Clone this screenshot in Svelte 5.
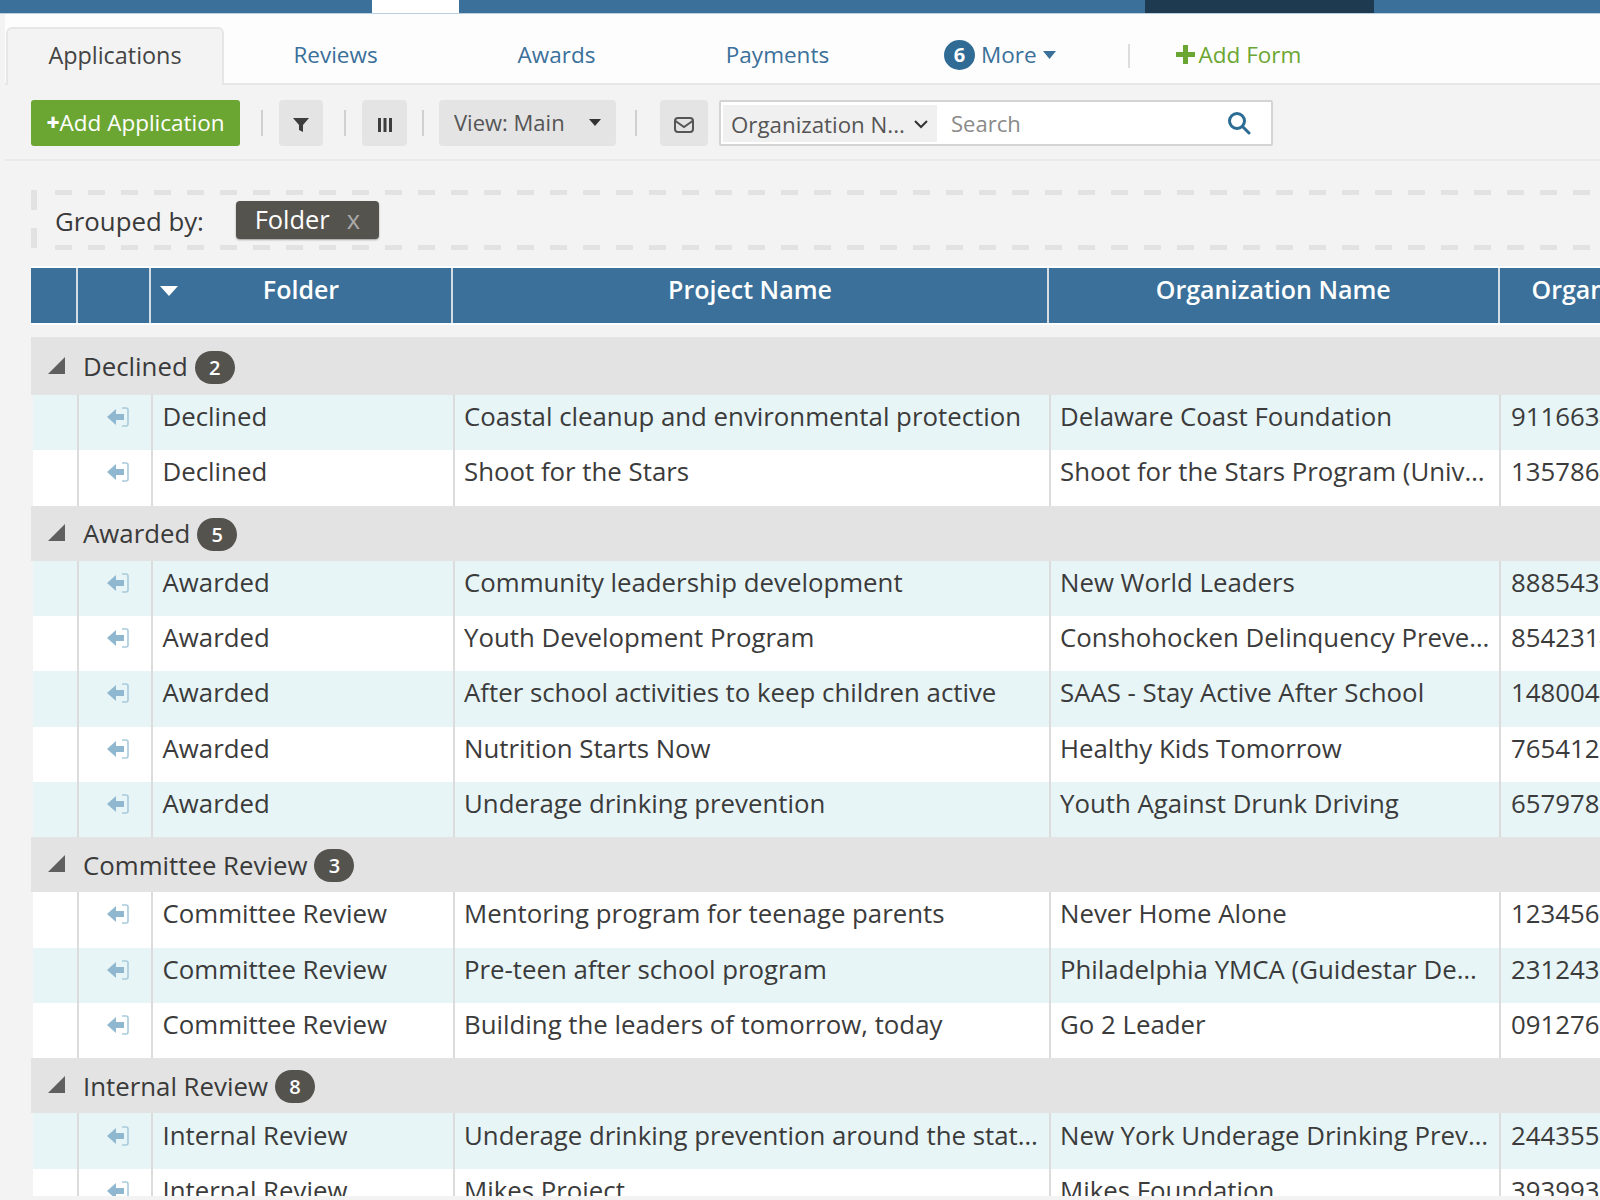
<script>
  const groups = [
    { name: 'Declined', rows: [
      ['Coastal cleanup and environmental protection', 'Delaware Coast Foundation', '9116634'],
      ['Shoot for the Stars', 'Shoot for the Stars Program (Univ…', '1357864'],
    ]},
    { name: 'Awarded', rows: [
      ['Community leadership development', 'New World Leaders', '8885432'],
      ['Youth Development Program', 'Conshohocken Delinquency Preve…', '8542314'],
      ['After school activities to keep children active', 'SAAS - Stay Active After School', '1480044'],
      ['Nutrition Starts Now', 'Healthy Kids Tomorrow', '7654123'],
      ['Underage drinking prevention', 'Youth Against Drunk Driving', '6579783'],
    ]},
    { name: 'Committee Review', rows: [
      ['Mentoring program for teenage parents', 'Never Home Alone', '1234567'],
      ['Pre-teen after school program', 'Philadelphia YMCA (Guidestar De…', '2312439'],
      ['Building the leaders of tomorrow, today', 'Go 2 Leader', '0912763'],
    ]},
    { name: 'Internal Review', rows: [
      ['Underage drinking prevention around the stat…', 'New York Underage Drinking Prev…', '2443551'],
      ['Mikes Project', 'Mikes Foundation', '3939931'],
    ]},
  ];
  const counts = [2, 5, 3, 8];
  let index = 0;
  const view = groups.map((g, i) => ({
    name: g.name,
    count: counts[i],
    rows: g.rows.map((r) => ({ cells: r, alt: index++ % 2 === 0 })),
  }));
</script>

<div class="page">
  <div class="topbar">
    <div class="seg s1"></div>
    <div class="seg s2"></div>
    <div class="seg s3"></div>
    <div class="seg s4"></div>
    <div class="seg s5"></div>
  </div>

  <nav class="tabs">
    <div class="tab active">Applications</div>
    <div class="tab">Reviews</div>
    <div class="tab">Awards</div>
    <div class="tab">Payments</div>
    <div class="more">
      <span class="count">6</span>
      <span class="morelabel">More</span>
      <svg class="morecaret" width="13" height="8" viewBox="0 0 13 8"><path d="M0 0h13L6.5 8z" fill="#3a7099"/></svg>
    </div>
    <span class="tabsep"></span>
    <div class="addform">
      <svg width="19" height="19" viewBox="0 0 19 19"><path d="M7 0h5v7h7v5h-7v7H7v-7H0V7h7z" fill="#6ca632"/></svg>
      <span>Add Form</span>
    </div>
  </nav>

  <div class="toolbar">
    <div class="addbtn"><b>+</b>Add Application</div>
    <span class="sep s-a"></span>
    <div class="iconbtn filter">
      <svg width="16" height="16" viewBox="0 0 16 16"><path d="M0 1h16L10 8v7L6 13V8z" fill="#3d3d3d"/></svg>
    </div>
    <span class="sep s-b"></span>
    <div class="iconbtn cols">
      <svg width="16" height="16" viewBox="0 0 16 16"><path d="M1 1h3v14H1zM6.5 1h3v14h-3zM12 1h3v14h-3z" fill="#3d3d3d"/></svg>
    </div>
    <span class="sep s-c"></span>
    <div class="viewbtn">
      <span>View: Main</span>
      <svg width="12" height="7" viewBox="0 0 12 7"><path d="M0 0h12L6 7z" fill="#333"/></svg>
    </div>
    <span class="sep s-d"></span>
    <div class="iconbtn mail">
      <svg width="20" height="16" viewBox="0 0 20 16" fill="none" stroke="#555" stroke-width="2"><rect x="1" y="1" width="18" height="14" rx="3"/><path d="M1.5 4l8.5 6 8.5-6"/></svg>
    </div>
    <div class="searchbox">
      <div class="select">
        <span>Organization N...</span>
        <svg width="14" height="9" viewBox="0 0 14 9" fill="none" stroke="#333" stroke-width="2"><path d="M1 1l6 6 6-6"/></svg>
      </div>
      <span class="placeholder">Search</span>
      <svg class="magnifier" width="24" height="24" viewBox="0 0 24 24" fill="none" stroke="#2b6b94" stroke-width="3" stroke-linecap="round"><circle cx="10" cy="10" r="7.5"/><path d="M15.5 15.5L22 22"/></svg>
    </div>
  </div>

  <div class="groupedby">
    <span class="gblabel">Grouped by:</span>
    <span class="chip">Folder <span class="x">x</span></span>
  </div>

  <div class="thead">
    <div class="th"></div>
    <div class="th"></div>
    <div class="th center">
      <svg class="sortcaret" width="18" height="10" viewBox="0 0 18 10"><path d="M0 0h18L9 10z" fill="#fff"/></svg>
      Folder
    </div>
    <div class="th center">Project Name</div>
    <div class="th center">Organization Name</div>
    <div class="th last">Organization Tax ID</div>
  </div>

  <div class="tbody">
    {#each view as g, gi}
      <div class="grouprow" class:first={gi === 0}>
        <svg class="tri" width="17" height="17" viewBox="0 0 17 17"><path d="M17 0v17H0z" fill="#5f5f5f"/></svg>
        <span class="gname">{g.name}</span>
        <span class="gcount">{g.count}</span>
      </div>
      {#each g.rows as r}
        <div class="row" class:alt={r.alt}>
          <div class="td"></div>
          <div class="td icon">
            <svg width="22" height="20" viewBox="0 0 22 20"><path d="M0 10l9-8v5h8v6H9v5z" fill="#8fb8d0"/><path d="M15 1h4a2 2 0 0 1 2 2v14a2 2 0 0 1-2 2h-4" fill="none" stroke="#a9cadb" stroke-width="1.6"/></svg>
          </div>
          <div class="td folder">{g.name}</div>
          <div class="td proj">{r.cells[0]}</div>
          <div class="td org">{r.cells[1]}</div>
          <div class="td ein">{r.cells[2]}</div>
        </div>
      {/each}
    {/each}
  </div>
</div>

<style>
  :global(html), :global(body) { margin: 0; background: #f3f3f3; overflow: hidden; }
  .page {
    width: 1600px; height: 1200px; overflow: hidden; display: flex; flex-direction: column;
    font-family: "Open Sans", "Liberation Sans", sans-serif; font-size: 25.8px; color: #333; background: #f3f3f3;
  }
  .topbar { display: flex; height: 13px; flex: none; border-bottom: 1px solid #b9cfdf; }
  .seg { background: #3a7099; }
  .s1 { width: 372px; }
  .s2 { width: 87px; background: #fff; }
  .s3 { width: 686px; }
  .s4 { width: 229px; background: #1e3a50; }
  .s5 { flex: 1; }

  .tabs {
    display: flex; align-items: flex-end; flex: none; height: 71px; margin-left: 5px; background: #fdfdfd;
    border-bottom: 2px solid #e6e6e6; box-sizing: border-box; font-size: 22.5px;
  }
  .tab { width: 221px; text-align: center; color: #3a7099; height: 55px; line-height: 53px; box-sizing: border-box; }
  .tab.active {
    width: 218px; margin-left: 1px; margin-right: 1px; color: #444; background: #f3f3f3; border: 2px solid #e6e6e6; border-bottom: none; border-radius: 6px 6px 0 0;
    line-height: 52px; height: 58px; margin-bottom: -2px; font-size: 23.4px;
  }
  .more { display: flex; align-items: center; height: 53px; margin: 0 0 2px 56px; color: #3a7099; }
  .count {
    width: 31px; height: 30px; border-radius: 50%; background: #2f6b94; color: #fff; font-size: 20px; font-weight: 700;
    display: flex; align-items: center; justify-content: center;
  }
  .morelabel { margin-left: 6px; }
  .morecaret { margin-left: 6px; }
  .tabsep { width: 2px; height: 24px; background: #ddd; margin: 0 0 15px 72px; }
  .addform { display: flex; align-items: center; height: 53px; gap: 4px; color: #6ca632; margin: 0 0 2px 46px; }

  .toolbar {
    display: flex; align-items: center; flex: none; height: 76px; margin-left: 5px; padding: 15px 0 13px 26px; box-sizing: border-box;
    border-bottom: 2px solid #e9e9e9; font-size: 22.5px;
  }
  .addbtn {
    width: 209px; height: 46px; padding-bottom: 2px; box-sizing: border-box; background: #6ca632; color: #fff; border-radius: 3px; display: flex; align-items: center; justify-content: center;
  }
  .addbtn b { font-weight: 800; }
  .sep { width: 2px; height: 26px; background: #d0d0d0; }
  .s-a { margin-left: 21px; }
  .s-b { margin-left: 21px; }
  .s-c { margin-left: 15px; }
  .s-d { margin-left: 19px; }
  .iconbtn, .viewbtn { height: 46px; background: #e4e4e4; border-radius: 4px; display: flex; align-items: center; justify-content: center; box-sizing: border-box; }
  .filter { width: 44px; margin-left: 16px; padding-top: 3px; }
  .cols { width: 45px; margin-left: 16px; padding-top: 4px; }
  .viewbtn { width: 177px; margin-left: 15px; padding: 0 15px 2px; justify-content: space-between; color: #555; font-size: 22px; }
  .mail { width: 48px; margin-left: 23px; padding-top: 4px; }
  .searchbox {
    margin-left: 11px; width: 554px; height: 46px; background: #fff; border: 2px solid #d4d4d4; box-sizing: border-box; display: flex; align-items: center; border-radius: 2px;
    padding-left: 2px;
  }
  .select {
    width: 214px; height: 37px; background: #f0f0f0; display: flex; align-items: center; justify-content: space-between; padding: 2px 9px 0 8px; box-sizing: border-box; color: #555; white-space: nowrap; font-size: 22.3px;
  }
  .placeholder { margin-left: 14px; color: #8a8a8a; font-size: 22px; flex: 1; }
  .magnifier { margin-right: 20px; }

  .groupedby {
    flex: none; margin: 29px 0 0 31px; height: 60px; display: flex; align-items: center; padding-left: 24px; box-sizing: border-box;
    background-image:
      repeating-linear-gradient(90deg, #e2e2e2 0 17px, transparent 17px 33px),
      repeating-linear-gradient(90deg, #e2e2e2 0 17px, transparent 17px 33px),
      repeating-linear-gradient(180deg, #e2e2e2 0 20px, transparent 20px 38px);
    background-size: 100% 5px, 100% 5px, 6px 100%;
    background-position: 24px 0, 24px 55px, 0 0;
    background-repeat: no-repeat;
  }
  .gblabel { color: #3a3a3a; position: relative; top: 1px; }
  .chip {
    margin-left: 32px; width: 143px; height: 38px; padding-bottom: 2px; box-sizing: border-box; background: #55534e; border-radius: 4px; color: #fff; display: flex; align-items: center; justify-content: center;
    gap: 17px; box-shadow: 0 1px 2px rgba(0,0,0,.35); font-size: 25.4px;
  }
  .x { color: #aaa; }

  .thead {
    flex: none; margin: 18px 0 0 31px; height: 55px; display: grid; grid-template-columns: 47px 73px 302px 596px 450.5px 300px; background: #3a7099;
    box-shadow: 0 -2px 0 #fff, 0 2px 0 #fff; color: #fff; font-weight: 600; font-size: 25px;
  }
  .th { border-right: 2px solid #d4dde4; box-sizing: border-box; padding-bottom: 14px; display: flex; align-items: center; position: relative; }
  .th.center { justify-content: center; }
  .th.last { border-right: none; padding-left: 32px; white-space: nowrap; }
  .sortcaret { position: absolute; left: 9px; top: 18px; }

  .tbody { flex: none; height: 859px; margin: 14px 0 0 31px; overflow: hidden; }
  .grouprow { height: 55.3px; background: #e3e3e3; display: flex; align-items: center; padding: 0 0 0 17px; box-sizing: border-box; }
  .grouprow.first { height: 58px; }
  .tri { position: relative; top: -1px; }
  .gname { margin-left: 18px; color: #3a3a3a; }
  .gcount {
    margin-left: 7px; width: 40px; height: 33px; border-radius: 17px; background: #55534e; color: #fff; font-size: 20px; font-weight: 600; display: flex; align-items: center; justify-content: center; position: relative; top: 1px;
  }
  .row {
    height: 55.25px; margin-left: 2px; display: grid; grid-template-columns: 46px 73.5px 302.5px 596px 450px 100px; background: #fff; align-items: stretch;
  }
  .row.alt { background: #e7f5f7; }
  .td {
    border-right: 2.5px solid #dcdcdc; box-sizing: border-box; display: flex; align-items: center; padding: 0 0 13px 10px; white-space: nowrap; overflow: hidden; color: #3b3b3b;
  }
  .td.proj, .td.org { padding-left: 9px; }
  .td.icon { padding: 0 0 11px 28px; }
  .td.ein { border-right: none; }
</style>
